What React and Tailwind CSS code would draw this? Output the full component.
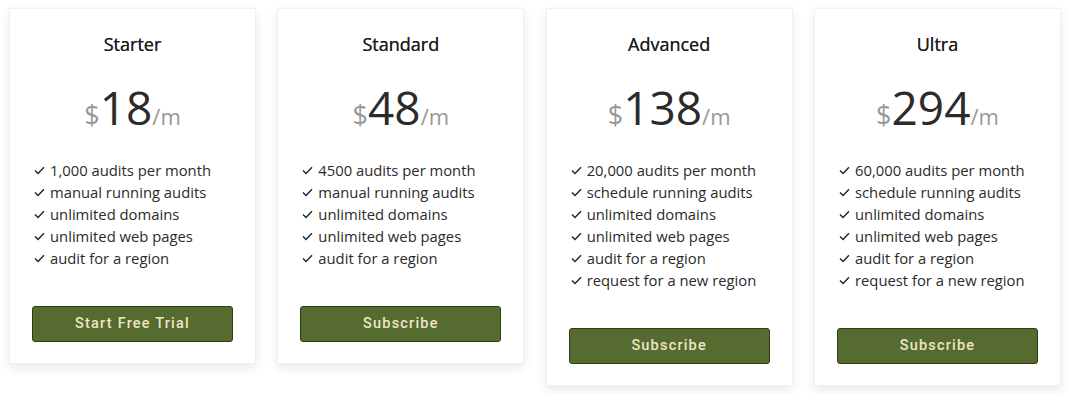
import React from 'react';

const plans = [
  {
    name: 'Starter',
    price: '18',
    cta: 'Start Free Trial',
    features: [
      '1,000 audits per month',
      'manual running audits',
      'unlimited domains',
      'unlimited web pages',
      'audit for a region',
    ],
  },
  {
    name: 'Standard',
    price: '48',
    cta: 'Subscribe',
    features: [
      '4500 audits per month',
      'manual running audits',
      'unlimited domains',
      'unlimited web pages',
      'audit for a region',
    ],
  },
  {
    name: 'Advanced',
    price: '138',
    cta: 'Subscribe',
    features: [
      '20,000 audits per month',
      'schedule running audits',
      'unlimited domains',
      'unlimited web pages',
      'audit for a region',
      'request for a new region',
    ],
  },
  {
    name: 'Ultra',
    price: '294',
    cta: 'Subscribe',
    features: [
      '60,000 audits per month',
      'schedule running audits',
      'unlimited domains',
      'unlimited web pages',
      'audit for a region',
      'request for a new region',
    ],
  },
];

function Check() {
  return (
    <svg width="11" height="9" viewBox="0 0 11 9" className="shrink-0">
      <path d="M1 4.6 L4 7.5 L10 1.2" fill="none" stroke="#222" strokeWidth="1.4" />
    </svg>
  );
}

function PlanCard({ plan }) {
  return (
    <div className="w-[247px] bg-white border border-[#f0f0f0] shadow-[0_4px_10px_rgba(0,0,0,0.09)] pt-[21px] pb-[21px] px-[22px]">
      <h3 className="text-center text-[18px] leading-[28px] text-[#1e1e1e] [text-shadow:0_0_0.4px_#1e1e1e]">{plan.name}</h3>

      {/* price */}
      <div className="mt-[26px] flex items-baseline justify-center text-[#999] h-[50px]">
        <span className="text-[27px] leading-none">$</span>
        <span className="text-[46px] leading-none text-[#2b2b2b]">{plan.price}</span>
        <span className="text-[22px] leading-none">/m</span>
      </div>

      <ul className="mt-[25px] pl-[2px]">
        {plan.features.map((f) => (
          <li key={f} className="flex items-center gap-[5px] text-[14.8px] leading-[22px] text-[#2b2b2b]">
            <Check />
            <span>{f}</span>
          </li>
        ))}
      </ul>

      <button className="mt-[37px] w-full h-[36px] rounded-[3px] bg-[#566b2f] border border-[#2e3e12] text-[#ece6c6] text-[14.5px] font-medium tracking-[1.2px] font-['Roboto',sans-serif]">
        {plan.cta}
      </button>
    </div>
  );
}

export default function App() {
  return (
    <div className="w-[1070px] h-[394px] bg-white pt-[8px] pl-[9px] font-['Open_Sans',sans-serif]">
      <div className="flex items-start gap-[21.33px]">
        {plans.map((p) => (
          <PlanCard key={p.name} plan={p} />
        ))}
      </div>
    </div>
  );
}
